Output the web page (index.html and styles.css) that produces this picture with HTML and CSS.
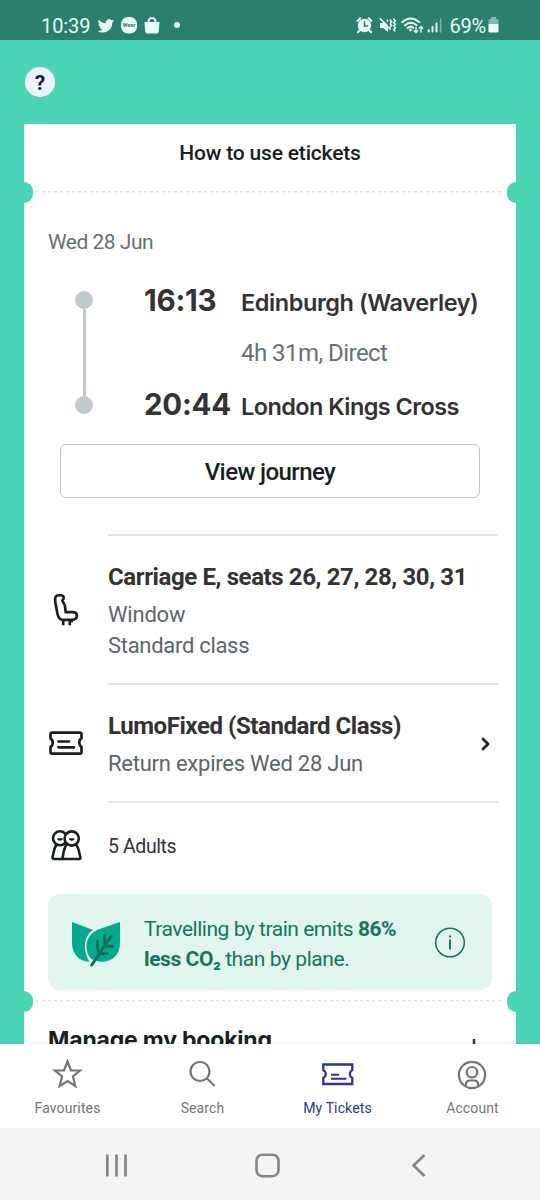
FILE: index.html
```
<!DOCTYPE html>
<html lang="en">
<head>
<meta charset="utf-8">
<title>My Tickets</title>
<link rel="stylesheet" href="styles.css">
</head>
<body>
<div class="phone">
  <header class="status">
    <span class="clock">10:39</span>
    <svg class="status-left" width="86" height="20" viewBox="0 0 86 20" fill="#e9fbf5">
      <path d="M17 3.700a7 7 0 0 1-1.900.5 3.400 3.400 0 0 0 1.500-1.800 7 7 0 0 1-2.100.8 3.350 3.350 0 0 0-5.700 3A9.500 9.500 0 0 1 1.900 2.700a3.350 3.350 0 0 0 1 4.500 3.300 3.300 0 0 1-1.500-.4c0 1.600 1.100 3 2.700 3.300a3.400 3.400 0 0 1-1.500.1c.4 1.300 1.600 2.300 3.100 2.300A6.700 6.700 0 0 1 .8 13.900c6.300 3.900 14.500.2 14.500-8.300A7 7 0 0 0 17 3.700z"/>
      <rect x="24" y="0" width="16" height="16.500" rx="7"/>
      <text class="wear" x="32" y="10.300" text-anchor="middle">Wear</text>
      <path d="M47.500 5h15l-.8 9.500q-.2 2-2.200 2h-9q-2 0-2.200-2z"/>
      <path d="M51.500 6V4.500a3.500 3.500 0 0 1 7 0V6" fill="none" stroke="#e9fbf5" stroke-width="2"/>
      <circle cx="80" cy="8" r="3"/>
    </svg>
    <svg class="status-right" width="90" height="18" viewBox="0 0 90 18" fill="none" stroke="#e9fbf5" stroke-linecap="round">
      <circle cx="8.500" cy="8.500" r="6.700" fill="#e9fbf5" stroke="none"/>
      <path d="M1.500 4l2.700-2.700M15.500 4l-2.700-2.700M3.500 13.500L2 15.200M13.500 13.500l1.500 1.700" stroke-width="2"/>
      <path d="M8.500 5v4h3" stroke="#2b806d" stroke-width="1.500"/>
      <path d="M24 6h3l5-4v13l-5-4h-3z" fill="#e9fbf5" stroke="none"/>
      <path d="M26 .5l10 10.500" stroke="#2b806d" stroke-width="2"/>
      <path d="M24.500 2l9.500 10" stroke-width="1.800"/>
      <path d="M34.200 3l1.500 1.700-1.500 1.800 1.500 1.700-1.500 1.700M37.800 2l1.500 1.700-1.500 1.800 1.500 1.700-1.500 1.800 1.500 1.700-1.500 1.800 1 1.500" stroke-width="1.500"/>
      <path d="M46.300 5.200q8.200-7.500 17 0M49 8.300q5.700-5 11.500 0M51.700 11q3-2.600 5.500-.3" stroke-width="2"/>
      <circle cx="54.500" cy="13" r="1.400" fill="#e9fbf5" stroke="none"/>
      <path d="M60 10.500v4.700m-1.700-1.500 1.700 1.800 1.700-1.800M65 15V9.800m-1.700 1.500L65 9.500l1.700 1.800" stroke-width="1.400"/>
      <path d="M72.700 14.500v-1.200M76.500 14.500V9.700M80.500 14.500V6.500" stroke-width="1.900"/>
      <path d="M84.700 15V2" stroke-width="1.600" opacity=".4"/>
    </svg>
    <span class="percent">69%</span>
    <svg class="battery" width="11" height="16" viewBox="0 0 11 16"><path d="M3 0h5v2h1q1.500 0 1.500 1.500V7H.5V3.500Q.5 2 2 2h1z" fill="#82b7a9"/><path d="M.5 7h10v7q0 1.500-1.500 1.500H2Q.5 15.500.5 14z" fill="#f3fffb"/></svg>
  </header>

  <div class="topbar"><span class="help">?</span></div>

  <main class="ticket">
    <h1 class="howto"><span>How to use etickets</span></h1>
    <div class="tear"></div>
    <p class="date"><span>Wed 28 Jun</span></p>

    <section class="journey">
      <div class="track"><i></i><b></b><i></i></div>
      <span class="time">16:13</span><span class="station s-dep">Edinburgh (Waverley)</span>
      <span class="duration">4h 31m, Direct</span>
      <span class="time">20:44</span><span class="station s-arr">London Kings Cross</span>
    </section>

    <button class="view"><span>View journey</span></button>

    <section class="row seats">
      <svg class="icon" width="36" height="36" viewBox="0 0 36 36" fill="none" stroke="#171f21" stroke-width="2.700" stroke-linejoin="round" stroke-linecap="round">
        <path d="M15.700 3.500Q15.500 1.200 11.700 1.200q-3.700 0-4.300 2.300-.6 2 .2 6.300l1.900 10.200q1.300 5.800 5.300 5.800h9.600q4.500-.5 4.500-4.300 0-3.400-4.500-3.400H17.700l-.7-6q-.3-2-2.300-4.500-.6-1.300.7-2.500z"/>
        <path d="M15.200 26.500v4.800M21.800 31.300v-4.300h3.200" stroke-linecap="butt" stroke-width="2.700"/>
      </svg>
      <div class="body">
        <h2><span class="w-seats">Carriage E, seats 26, 27, 28, 30, 31</span></h2>
        <p><span class="w-window">Window</span></p>
        <p><span class="w-class">Standard class</span></p>
      </div>
    </section>

    <section class="row fare">
      <svg class="icon" width="36" height="36" viewBox="0 0 36 36" fill="none" stroke="#171f21" stroke-width="2.700" stroke-linejoin="round" stroke-linecap="round">
        <path d="M4.200 6.600h27.600q1.700 0 1.700 1.700v4q-2.300 1.300-2.300 4.200t2.300 4.500v5q0 1.700-1.700 1.700H4.200q-1.700 0-1.700-1.700v-5q2.300-1.500 2.300-4.300T2.500 12.500V8.300q0-1.700 1.700-1.700z"/>
        <path d="M10.500 15.500h10.500M10.500 21.300h15.500"/>
      </svg>
      <div class="body">
        <h2><span class="w-fare">LumoFixed (Standard Class)</span></h2>
        <p><span class="w-return">Return expires Wed 28 Jun</span></p>
      </div>
      <svg class="chevron" width="12" height="16" viewBox="0 0 12 16" fill="none" stroke="#171f21" stroke-width="2.700" stroke-linejoin="round" stroke-linecap="round"><path d="M3 3l5.100 5-5.100 5"/></svg>
    </section>

    <section class="row people">
      <svg class="icon" width="36" height="36" viewBox="0 0 36 36" fill="none" stroke="#171f21" stroke-width="2.600" stroke-linejoin="round" stroke-linecap="round">
        <path d="M8.500 16.500Q6.500 20 5.700 24L4.600 29q-.4 2 1.500 2h25q1.700 0 1.200-2l-1.500-6.500q-.9-3.500-2.800-6M18.500 16.500q-2 3-2.800 7l-1.200 7"/>
        <circle cx="12" cy="10.300" r="7"/><circle cx="23.700" cy="10.500" r="7.100" fill="#fff"/>
        <path d="M9.800 11h4.400q-2.200 2-4.400 0zM21.500 11h4.400q-2.200 2-4.400 0z" stroke-width="1.300"/>
      </svg>
      <p class="adults"><span>5 Adults</span></p>
    </section>

    <aside class="eco">
      <svg class="leaf" width="50" height="48" viewBox="0 0 50 48">
        <path d="M1 1l21 8C13 15 11 28 18.500 40.700 9 41 1 33 1 22z" fill="#05a98d"/>
        <path d="M49 1v21c0 12-8 19-19 18.800Q25 40.500 20.500 38C16.500 34 15.500 30 15.500 25 16 15 22 10 30 7.500z" fill="#05a98d"/>
        <path d="M20 45l21-31M26.500 19v7.500q0 4 2 4M33.500 13v6q0 4 2 4m-3 2.200h10M27.500 32.500h10" fill="none" stroke="#116e5a" stroke-width="2.900"/>
      </svg>
      <p><span class="w-eco1">Travelling by train emits <b>86%</b></span><br><span class="w-eco2"><b>less CO₂</b> than by plane.</span></p>
      <svg class="info" width="32" height="32" viewBox="0 0 32 32" fill="none" stroke="#137660"><circle cx="16" cy="16.500" r="14.300" stroke-width="1.500"/><path d="M16 13.500v10M16 9.500v2" stroke-width="1.900"/></svg>
    </aside>
    <div class="tear"></div>
    <div class="manage"><h2><span>Manage my booking</span></h2><svg width="20" height="20" viewBox="0 0 20 20" stroke="#333" stroke-width="2.500"><path d="M10 1v18M1 10h18"/></svg></div>
  </main>

  <nav class="tabs">
    <a><svg width="32" height="32" viewBox="0 0 32 32" fill="none" stroke="#757575" stroke-width="2.200"><path d="M15.500 3.500l3.500 9h9.100l-7.200 6 2.500 9.500-7.900-5-7.900 5 2.500-9.500-7.200-6h9.100z"/></svg><span>Favourites</span></a>
    <a><svg width="32" height="32" viewBox="0 0 32 32" fill="none" stroke="#757575" stroke-width="2.200"><circle cx="13" cy="13.500" r="9.500"/><path d="M19.700 20.300l8 7.700"/></svg><span>Search</span></a>
    <a class="active"><svg width="32" height="32" viewBox="0 0 32 32" fill="none" stroke="#2c3499" stroke-width="2.300"><path d="M1.300 6.500h29v5.500q-2.500 1.500-2.500 4t2.500 4v6h-29v-6q2.500-1.500 2.500-4t-2.500-4z"/><path d="M9 16.800h8M9 20.800h15.500" stroke-width="2"/></svg><span>My Tickets</span></a>
    <a><svg width="32" height="32" viewBox="0 0 32 32" fill="none" stroke="#757575" stroke-width="2.200"><circle cx="15" cy="17" r="13.100"/><circle cx="15" cy="14.200" r="5.200"/><path d="M8.900 28v-1.500q0-4 4-4h4.200q4 0 4 4V28"/></svg><span>Account</span></a>
  </nav>

  <footer class="system">
    <svg width="24" height="28" viewBox="0 0 24 28" stroke="#858585" stroke-width="2.700"><path d="M2.300 3.500v22M11.500 3.500v22M20.500 3.500v22"/></svg>
    <svg width="28" height="28" viewBox="0 0 28 28" fill="none" stroke="#858585" stroke-width="2.600"><rect x="1.500" y="3.700" width="22" height="21.500" rx="6"/></svg>
    <svg width="18" height="28" viewBox="0 0 18 28" fill="none" stroke="#858585" stroke-width="2.600"><path d="M15.500 4L4.500 14.500l11 10.500"/></svg>
  </footer>
</div>
</body>
</html>
```

FILE: styles.css
```
* { box-sizing: border-box; margin: 0; padding: 0; }
body { font-family: Roboto, sans-serif; background: #4ad5b6; color: #333; }
.phone { width: 540px; height: 1200px; display: flex; flex-direction: column; overflow: hidden; }
span { white-space: nowrap; }
svg { display: block; flex: none; }

.status { height: 40px; flex: none; background: #2b806d; display: flex; align-items: flex-start; padding: 17px 0 0 41px; color: #e9fbf5; }
.clock { width: 56px; font-size: 20px; line-height: 19px; letter-spacing: -.1px; }
.status-left { width: 86px; }
.wear { font: 700 5.5px Roboto, sans-serif; fill: #2b806d; }
.status-right { margin-left: 173px; }
.percent { width: 38px; margin-left: 3.5px; font-size: 20px; line-height: 18px; letter-spacing: -.3px; }

.topbar { height: 84px; flex: none; padding: 27px 25px; }
.help { display: block; width: 30px; height: 30px; border-radius: 50%; background: #eef3fb; color: #10194d; text-align: center; font-size: 21px; line-height: 32px; font-weight: 700; }

.ticket { height: 920px; flex: none; margin: 0 24px; background: #fff; overflow: hidden; }
.howto { height: 57px; text-align: center; font-size: 21px; line-height: 59px; font-weight: 500; color: #171f21; letter-spacing: -.18px; }
.tear { height: 22px; display: flex; align-items: center; justify-content: space-between; background: repeating-linear-gradient(90deg, #dfe1e1 0 3px, transparent 3px 6px) 12px 10px / 468px 1.5px no-repeat; }
.tear::before, .tear::after { content: ""; width: 9px; height: 21px; background: #4ad5b6; border-radius: 0 9px 9px 0; }
.tear::after { border-radius: 9px 0 0 9px; }
.date { height: 78px; padding: 26px 24px 0; font-size: 21px; line-height: 26px; color: #667174; letter-spacing: -.5px; }

.journey { height: 141px; margin: 0 12px 0 50px; padding-top: 1px; display: grid; grid-template-columns: 70px 97px 1fr; grid-template-rows: 52px 52px 36px; line-height: 36px; }
.track { grid-row: 1 / 4; width: 20px; height: 123px; margin-top: 9px; display: flex; flex-direction: column; align-items: center; }
.track i { width: 18px; height: 18px; border-radius: 50%; background: #c1cacd; }
.track b { width: 3px; flex: 1; background: #c1cacd; }
.time { font: 700 29.5px/37px Inter, sans-serif; color: #333; letter-spacing: -.25px; }
.station { font: 600 23.5px/41px Inter, sans-serif; color: #333; }
.s-dep { letter-spacing: -.43px; }
.s-arr { letter-spacing: -.58px; }
.duration { grid-column: 3; font-size: 24px; line-height: 39px; color: #667174; letter-spacing: -.54px; }

.view { display: block; width: 420px; height: 54px; margin: 22px 36px 36px; padding-top: 2px; border: 1.5px solid #c3c5c7; border-radius: 6px; background: #fff; font: 500 24px/50px Roboto, sans-serif; color: #171f21; letter-spacing: -.58px; }

.row { display: flex; padding: 0 18px 0 24px; }
.icon { margin-right: 24px; }
.body { flex: 1; border-top: 2px solid #e4e6e6; }
.row h2 { font-size: 24px; line-height: 32px; font-weight: 700; margin: 25px 0 7px; }
.row p { font-size: 22px; line-height: 30.5px; color: #5c6668; }
.w-seats { letter-spacing: -.39px; }
.w-window { letter-spacing: -.2px; }
.w-class { letter-spacing: -.3px; }
.w-fare { letter-spacing: -.44px; }
.w-return { letter-spacing: -.24px; }
.seats { height: 149px; }
.seats .icon { margin-top: 60px; }
.fare { height: 118px; }
.fare .icon { margin-top: 43px; }
.fare .chevron { margin: 53px 6px 0 -18px; }
.people { height: 94px; }
.people .icon { margin-top: 27px; }
.people .adults { flex: 1; border-top: 2px solid #e4e6e6; padding-top: 29px; font-size: 19.5px; line-height: 30px; color: #333; letter-spacing: -.4px; }

.eco { height: 96px; width: 444px; margin: -1px 24px 0; border-radius: 12px; background: #e1f5ef; display: flex; align-items: center; padding: 0 26px 0 23px; color: #137660; }
.eco p { width: 290px; margin: 3px 0 0 23px; font-size: 21px; line-height: 30px; }
.w-eco1 { letter-spacing: -.47px; }
.w-eco2 { letter-spacing: -.42px; }
.eco .leaf { margin-top: 5px; }
.manage { display: flex; justify-content: space-between; padding: 10px 32px 0 24px; }
.manage h2 { font: 700 23px/36px Inter, sans-serif; color: #171f21; letter-spacing: -.2px; }
.manage svg { margin-top: 16px; }

.tabs { height: 84px; flex: none; background: #fff; box-shadow: 0 -1px 3px #0001; display: grid; grid-template-columns: repeat(4, 1fr); color: #757575; }
.tabs a { display: flex; flex-direction: column; align-items: center; padding-top: 14px; }
.tabs span { font-size: 14px; line-height: 18px; margin-top: 9px; letter-spacing: .12px; }
.tabs .active { color: #2c3499; }
.system { height: 72px; flex: none; background: #f5f5f5; display: flex; align-items: flex-start; justify-content: space-between; padding: 23px 113px 0 105px; }
```
